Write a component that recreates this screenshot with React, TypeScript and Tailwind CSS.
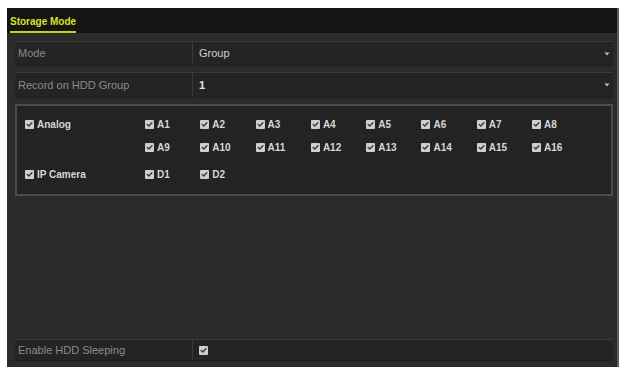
import { FC } from 'react';

type CheckProps = {
  label: string;
  bold?: boolean;
};

const CheckMark: FC = () => {
  return (
    <span className="flex h-[9px] w-[9px] shrink-0 items-center justify-center rounded-[1px] bg-[#cfcfcf]">
      <svg width="7" height="7" viewBox="0 0 7 7" fill="none">
        <path d="M1.2 3.6L2.8 5.1L5.9 1.8" stroke="#3a3a3a" strokeWidth="1.4" strokeLinecap="round" strokeLinejoin="round" />
      </svg>
    </span>
  );
};

const Check: FC<CheckProps> = ({ label, bold = true }) => {
  return (
    <div className="flex items-center gap-[3px]">
      <CheckMark />
      <span className={bold ? 'font-bold text-[#d6d6d6]' : 'text-[#d6d6d6]'}>{label}</span>
    </div>
  );
};

const Caret: FC = () => {
  return (
    <svg width="6" height="4" viewBox="0 0 6 4" className="shrink-0">
      <path d="M0.5 0.5H5.5L3 3.5Z" fill="#bdbdbd" />
    </svg>
  );
};

type RowProps = {
  label: string;
  value?: string;
  dropdown?: boolean;
  check?: boolean;
  boldValue?: boolean;
  height: string;
};

const SettingRow: FC<RowProps> = ({ label, value, dropdown, check, boldValue, height }) => {
  return (
    <div className={`flex ${height} border-t border-t-[#3a3a3a] border-b border-b-[#1e1e1e] bg-[#242424]`}>
      <div className="flex w-[178px] items-center border-r border-r-[#3a3a3a] pl-[3px] text-[11px] text-[#8c8c8c]">
        {label}
      </div>
      <div className="flex flex-1 items-center justify-between pl-[6px] pr-[3px] text-[11px]">
        {check ? (
          <CheckMark />
        ) : (
          <span className={boldValue ? 'font-bold text-[#e6e6e6]' : 'text-[#d2d2d2]'}>{value}</span>
        )}
        {dropdown && <Caret />}
      </div>
    </div>
  );
};

const channels = ['A1', 'A2', 'A3', 'A4', 'A5', 'A6', 'A7', 'A8'];
const channels2 = ['A9', 'A10', 'A11', 'A12', 'A13', 'A14', 'A15', 'A16'];
const ipChannels = ['D1', 'D2'];

const ChannelRow: FC<{ head?: string; items: string[]; className?: string }> = ({ head, items, className }) => {
  return (
    <div className={`flex h-[23px] items-center ${className ?? ''}`}>
      <div className="w-[120px]">{head && <Check label={head} />}</div>
      {items.map((c) => (
        <div key={c} className="w-[55.3px]">
          <Check label={c} />
        </div>
      ))}
    </div>
  );
};

const App = () => {
  return (
    <div
      className="h-[367px] w-[624px] bg-white pl-[7px] pr-[5px] pt-[8px]"
      style={{ fontFamily: '"Liberation Sans", Arial, sans-serif' }}
    >
      <div className="flex h-full flex-col bg-[#2b2b2b] border-r-2 border-r-[#5a5a5a]">
        <div className="flex h-[25px] items-end bg-[#141414] pl-[3px]">
          <div className="border-b-2 border-b-[#c8d21c] pb-[2px] text-[10px] font-bold text-[#d9e42a]">
            Storage Mode
          </div>
        </div>
        <div className="flex flex-1 flex-col pl-[8px] pr-[4px] pt-[8px]">
          <SettingRow label="Mode" value="Group" dropdown height="h-[25px]" />
          <div className="h-[6px]" />
          <SettingRow label="Record on HDD Group" value="1" boldValue dropdown height="h-[26px]" />
          <div className="h-[6px]" />
          <div className="border-2 border-[#4c4c4c] bg-[#232323] pb-[8px] pl-[8px] pt-[7px] text-[10px]">
            <ChannelRow head="Analog" items={channels} />
            <ChannelRow items={channels2} />
            <ChannelRow head="IP Camera" items={ipChannels} className="mt-[4px]" />
          </div>
          <div className="flex-1" />
          <SettingRow label="Enable HDD Sleeping" check height="h-[22px]" />
          <div className="h-[6px]" />
        </div>
      </div>
    </div>
  );
};

export default App;
